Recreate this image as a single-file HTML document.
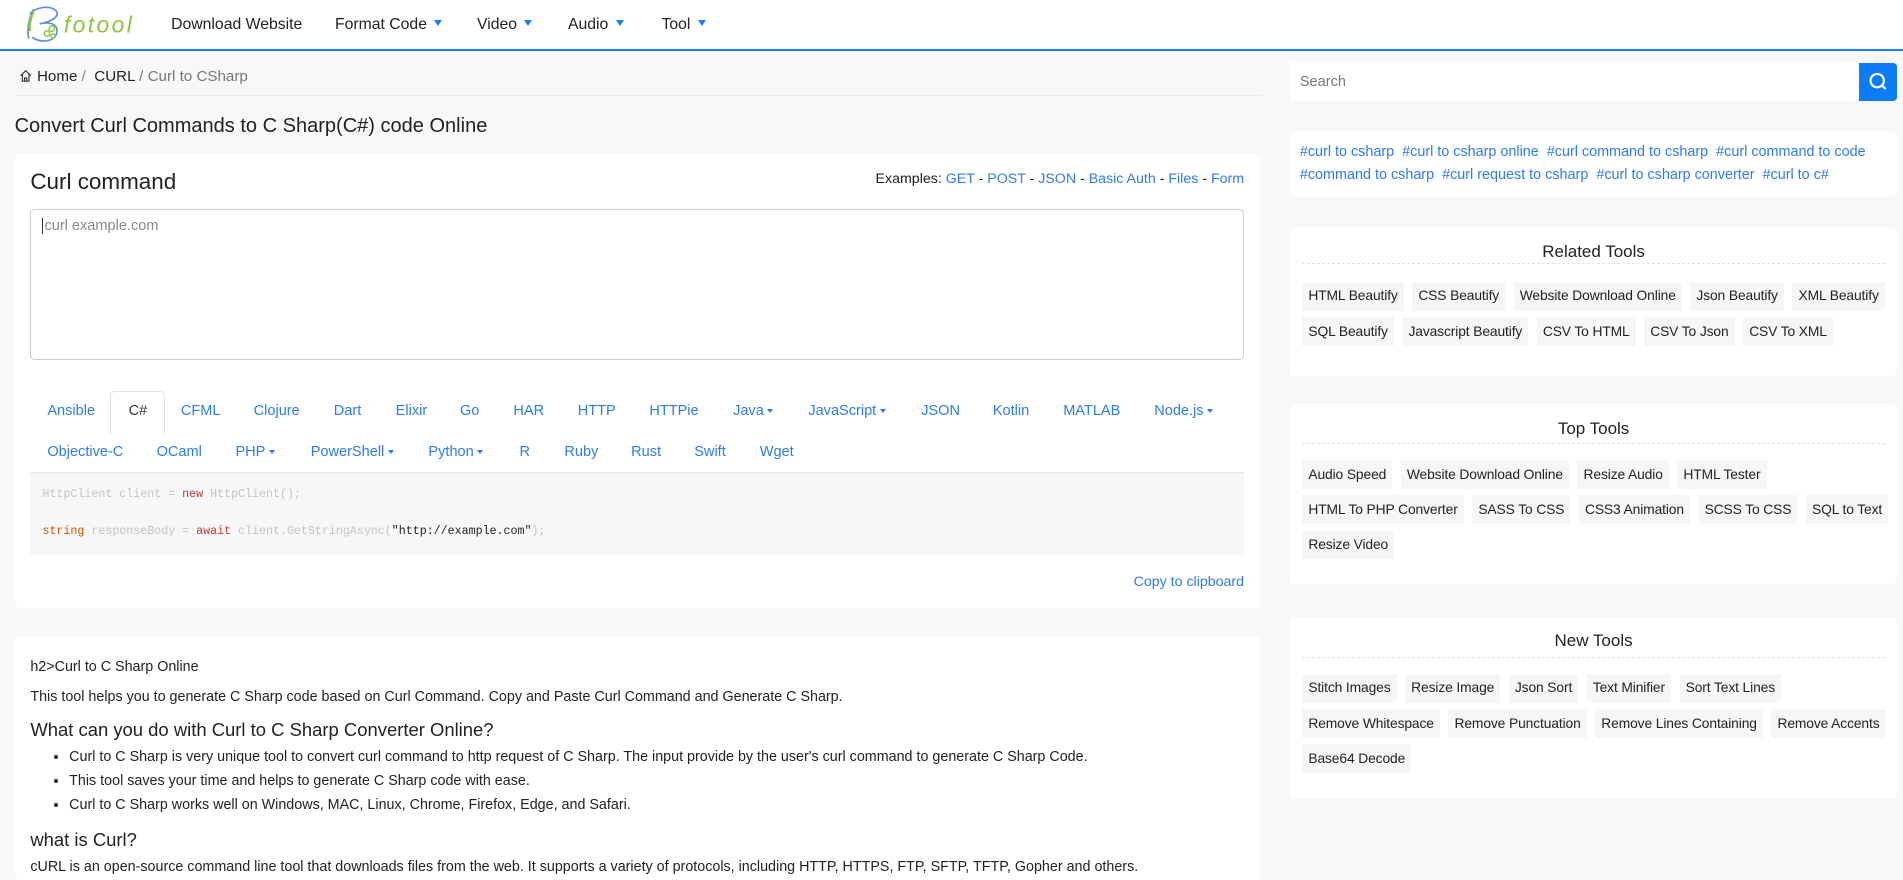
<!DOCTYPE html>
<html><head><meta charset="utf-8">
<style>
html{zoom:1.2137;}
*{box-sizing:border-box;margin:0;padding:0}
body{width:1568px;height:718px;overflow:hidden;background:#f8f8f8;font-family:"Liberation Sans",Arial,sans-serif;color:#212529;position:relative}
a{color:#2b7bf5;text-decoration:none}
.hdr{position:absolute;left:0;top:0;width:1568px;height:42px;background:#fff;border-bottom:2px solid #1a7ef5}
.nav{position:absolute;top:13px;font-size:13px;color:#222}
.caret{display:inline-block;border-left:3.5px solid transparent;border-right:3.5px solid transparent;border-top:5px solid #1a7ef5;margin-left:6px;vertical-align:2px}
.caret.s{border-top-color:#2b7bf5;margin-left:3px;border-left-width:3px;border-right-width:3px;border-top-width:4px}
.abs{position:absolute}
.card{position:absolute;background:#fff;border-radius:4px}
.tab{position:absolute;font-size:12px;color:#2b7bf5}
.chip{display:inline-block;background:#f5f6f7;font-size:11.4px;color:#222;padding:4px 5px;margin:0 7px 5px 0;line-height:16px;letter-spacing:-0.1px}
.chips{position:absolute;left:10px;width:490px;font-size:0}
.ttl{position:absolute;left:0;width:500px;text-align:center;font-size:14px;color:#222}
.dash{position:absolute;left:10px;right:10px;border-top:1px dashed #e3e3e3}
.code{font-family:"Liberation Mono",monospace;font-size:9.6px;color:#c4c4c4}
</style></head><body>
<div class="hdr">
<svg class="abs" style="left:16px;top:2px" width="100" height="38" viewBox="0 0 100 38">
<path d="M12 6c-3 6-6 14-4 24M9 10c4-6 18-8 22-2 3 5-8 9-14 10 8-2 16 0 14 8-2 7-14 8-20 3" fill="none" stroke="#5b8fe0" stroke-width="1.4"/>
<path d="M12 8c-2 4-4 10-3 16" stroke="#8cc63f" stroke-width="2" fill="none"/>
<circle cx="23" cy="26" r="2.2" fill="none" stroke="#8cc63f" stroke-width="1.2"/><circle cx="27" cy="22" r="2.2" fill="none" stroke="#8cc63f" stroke-width="1.2"/><circle cx="28" cy="28" r="1.8" fill="none" stroke="#8cc63f" stroke-width="1.2"/>
<text x="37" y="25" font-family="Liberation Sans,sans-serif" font-style="italic" font-size="19" fill="#8cc63f" textLength="56">fotool</text>
</svg>
<div class="nav" style="left:141px">Download Website</div>
<div class="nav" style="left:276px">Format Code<span class="caret"></span></div>
<div class="nav" style="left:393px">Video<span class="caret"></span></div>
<div class="nav" style="left:468px">Audio<span class="caret"></span></div>
<div class="nav" style="left:545px">Tool<span class="caret"></span></div>
</div>

<div class="abs" style="left:16px;top:56px;font-size:12.5px;color:#222">
<svg width="11" height="11" viewBox="0 0 12 12" style="vertical-align:-1px"><path d="M1.5 6L6 1.5 10.5 6M3 5v6h6V5M5 11V8h2v3" fill="none" stroke="#333" stroke-width="1"/></svg> Home <span style="color:#888">/</span>&nbsp; CURL <span style="color:#777">/ Curl to CSharp</span></div>
<div class="abs" style="left:12px;top:78px;width:1028px;border-top:1px solid #ececec"></div>
<div class="abs" style="left:12px;top:95px;font-size:16.5px;color:#222">Convert Curl Commands to C Sharp(C#) code Online</div>

<div class="card" style="left:12px;top:126px;width:1026px;height:375px">
<div class="abs" style="left:13px;top:13px;font-size:18.5px;color:#222">Curl command</div>
<div class="abs" style="right:13px;top:15px;font-size:11.7px;color:#222">Examples: <a>GET</a> - <a>POST</a> - <a>JSON</a> - <a>Basic Auth</a> - <a>Files</a> - <a>Form</a></div>
<div class="abs" style="left:13px;top:46px;width:1000px;height:125px;border:1px solid #ccc;border-radius:4px">
<div class="abs" style="left:9px;top:7px;font-size:12px;color:#888;border-left:1px solid #333;padding-left:1px">curl example.com</div></div>
<div class="abs" style="left:79px;top:196px;width:45px;height:36px;border:1px solid #e3e3e3;border-bottom:none;border-radius:4px 4px 0 0;background:#fff"></div>
<div class="tab" style="left:27px;top:206px">Ansible</div>
<div class="tab" style="left:94px;top:206px;color:#333">C#</div>
<div class="tab" style="left:137px;top:206px">CFML</div>
<div class="tab" style="left:197px;top:206px">Clojure</div>
<div class="tab" style="left:263px;top:206px">Dart</div>
<div class="tab" style="left:314px;top:206px">Elixir</div>
<div class="tab" style="left:367px;top:206px">Go</div>
<div class="tab" style="left:411px;top:206px">HAR</div>
<div class="tab" style="left:464px;top:206px">HTTP</div>
<div class="tab" style="left:523px;top:206px">HTTPie</div>
<div class="tab" style="left:592px;top:206px">Java<span class="caret s"></span></div>
<div class="tab" style="left:654px;top:206px">JavaScript<span class="caret s"></span></div>
<div class="tab" style="left:747px;top:206px">JSON</div>
<div class="tab" style="left:806px;top:206px">Kotlin</div>
<div class="tab" style="left:864px;top:206px">MATLAB</div>
<div class="tab" style="left:939px;top:206px">Node.js<span class="caret s"></span></div>
<div class="tab" style="left:27px;top:240px">Objective-C</div>
<div class="tab" style="left:117px;top:240px">OCaml</div>
<div class="tab" style="left:182px;top:240px">PHP<span class="caret s"></span></div>
<div class="tab" style="left:244px;top:240px">PowerShell<span class="caret s"></span></div>
<div class="tab" style="left:341px;top:240px">Python<span class="caret s"></span></div>
<div class="tab" style="left:416px;top:240px">R</div>
<div class="tab" style="left:453px;top:240px">Ruby</div>
<div class="tab" style="left:508px;top:240px">Rust</div>
<div class="tab" style="left:560px;top:240px">Swift</div>
<div class="tab" style="left:614px;top:240px">Wget</div>
<div class="abs" style="left:13px;top:263px;width:1000px;height:68px;background:#f7f7f7;border-top:1px solid #e6e6e6">
<div class="abs code" style="left:10px;top:12px">HttpClient client = <span style="color:#c0392b">new</span> HttpClient();</div>
<div class="abs code" style="left:10px;top:43px"><span style="color:#d35400">string</span> responseBody = <span style="color:#c0392b">await</span> client.GetStringAsync(<span style="color:#222">"http://example.com"</span>);</div>
</div>
<div class="abs" style="right:13px;top:347px;font-size:11.7px;color:#2b7bf5">Copy to clipboard</div>
</div>

<div class="card" style="left:12px;top:525px;width:1026px;height:200px;font-size:11.8px;color:#222">
<div class="abs" style="left:13px;top:18px">h2&gt;Curl to C Sharp Online</div>
<div class="abs" style="left:13px;top:43px">This tool helps you to generate C Sharp code based on Curl Command. Copy and Paste Curl Command and Generate C Sharp.</div>
<div class="abs" style="left:13px;top:67px;font-size:15.2px">What can you do with Curl to C Sharp Converter Online?</div>
<ul class="abs" style="left:45px;top:90px;line-height:19.5px">
<li>Curl to C Sharp is very unique tool to convert curl command to http request of C Sharp. The input provide by the user's curl command to generate C Sharp Code.</li>
<li>This tool saves your time and helps to generate C Sharp code with ease.</li>
<li>Curl to C Sharp works well on Windows, MAC, Linux, Chrome, Firefox, Edge, and Safari.</li></ul>
<div class="abs" style="left:13px;top:158px;font-size:15.2px">what is Curl?</div>
<div class="abs" style="left:13px;top:183px">cURL is an open-source command line tool that downloads files from the web. It supports a variety of protocols, including HTTP, HTTPS, FTP, SFTP, TFTP, Gopher and others.</div>
</div>

<div class="card" style="left:1063px;top:52px;width:500px;height:31px;border-radius:0">
<div class="abs" style="left:8px;top:9px;font-size:12px;color:#777">Search</div>
<div class="abs" style="left:469px;top:0;width:31px;height:31px;background:#0d7cf7;border-radius:0 3px 3px 0">
<svg width="31" height="31" viewBox="0 0 31 31"><circle cx="15" cy="14.5" r="5.5" fill="none" stroke="#fff" stroke-width="1.8"/><path d="M19 18.5l3 3" stroke="#fff" stroke-width="1.8"/></svg></div>
</div>
<div class="card" style="left:1063px;top:108px;width:500px;height:54px;font-size:11.85px;line-height:19px;padding:8px 8px">
<a>#curl to csharp</a>&nbsp; <a>#curl to csharp online</a>&nbsp; <a>#curl command to csharp</a>&nbsp; <a>#curl command to code</a><br><a>#command to csharp</a>&nbsp; <a>#curl request to csharp</a>&nbsp; <a>#curl to csharp converter</a>&nbsp; <a>#curl to c#</a></div>

<div class="card" style="left:1063px;top:187px;width:500px;height:123px">
<div class="ttl" style="top:12px">Related Tools</div><div class="dash" style="top:30px"></div>
<div class="chips" style="top:45px"><span class="chip">HTML Beautify</span><span class="chip">CSS Beautify</span><span class="chip">Website Download Online</span><span class="chip">Json Beautify</span><span class="chip">XML Beautify</span><span class="chip">SQL Beautify</span><span class="chip">Javascript Beautify</span><span class="chip">CSV To HTML</span><span class="chip">CSV To Json</span><span class="chip">CSV To XML</span></div>
</div>
<div class="card" style="left:1063px;top:333px;width:500px;height:148px">
<div class="ttl" style="top:12px">Top Tools</div><div class="dash" style="top:32px"></div>
<div class="chips" style="top:46px"><span class="chip">Audio Speed</span><span class="chip">Website Download Online</span><span class="chip">Resize Audio</span><span class="chip">HTML Tester</span><span class="chip">HTML To PHP Converter</span><span class="chip">SASS To CSS</span><span class="chip">CSS3 Animation</span><span class="chip">SCSS To CSS</span><span class="chip">SQL to Text</span><span class="chip">Resize Video</span></div>
</div>
<div class="card" style="left:1063px;top:508px;width:500px;height:150px">
<div class="ttl" style="top:12px">New Tools</div><div class="dash" style="top:33px"></div>
<div class="chips" style="top:47px"><span class="chip">Stitch Images</span><span class="chip">Resize Image</span><span class="chip">Json Sort</span><span class="chip">Text Minifier</span><span class="chip">Sort Text Lines</span><span class="chip">Remove Whitespace</span><span class="chip">Remove Punctuation</span><span class="chip">Remove Lines Containing</span><span class="chip">Remove Accents</span><span class="chip">Base64 Decode</span></div>
</div>
</body></html>
